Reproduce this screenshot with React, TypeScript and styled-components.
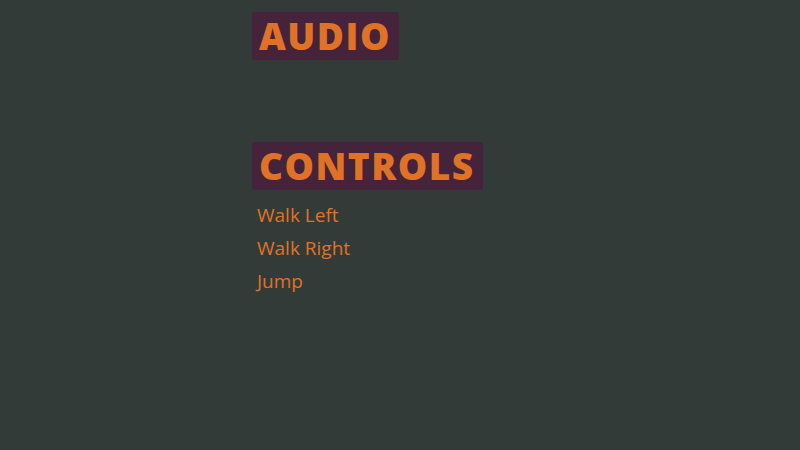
import React from "react";
import styled, { createGlobalStyle } from "styled-components";

const Global = createGlobalStyle`
  html, body { margin: 0; padding: 0; background: #323b38; }
  body { font-family: "Open Sans", "Noto Sans", sans-serif; }
`;

const Page = styled.div`
  width: 800px;
  height: 450px;
  background: #323b38;
  box-sizing: border-box;
  padding: 12px 0 0 252px;
  display: flex;
  flex-direction: column;
`;

const Section = styled.section<{ $minHeight?: number }>`
  display: flex;
  flex-direction: column;
  align-items: flex-start;
  min-height: ${(p) => (p.$minHeight ? `${p.$minHeight}px` : "auto")};
`;

const Heading = styled.h2`
  margin: 0;
  background: #45233b;
  color: #e07227;
  font-family: "Open Sans", "Noto Sans", sans-serif;
  font-weight: 800;
  font-size: 37px;
  line-height: 48px;
  height: 48px;
  padding: 0 8px 0 7px;
  border-radius: 3px;
  letter-spacing: 1.5px;
`;

const List = styled.ul`
  list-style: none;
  margin: 9px 0 0;
  padding: 0 0 0 5px;
  display: flex;
  flex-direction: column;
`;

const Item = styled.li`
  color: #e07227;
  font-family: "Open Sans", "Noto Sans", sans-serif;
  font-size: 19px;
  line-height: 33px;
  height: 33px;
`;

export default function App() {
  return (
    <>
      <Global />
      <Page>
        <Section $minHeight={130}>
          <Heading>AUDIO</Heading>
        </Section>
        <Section>
          <Heading>CONTROLS</Heading>
          <List>
            <Item>Walk Left</Item>
            <Item>Walk Right</Item>
            <Item>Jump</Item>
          </List>
        </Section>
      </Page>
    </>
  );
}
